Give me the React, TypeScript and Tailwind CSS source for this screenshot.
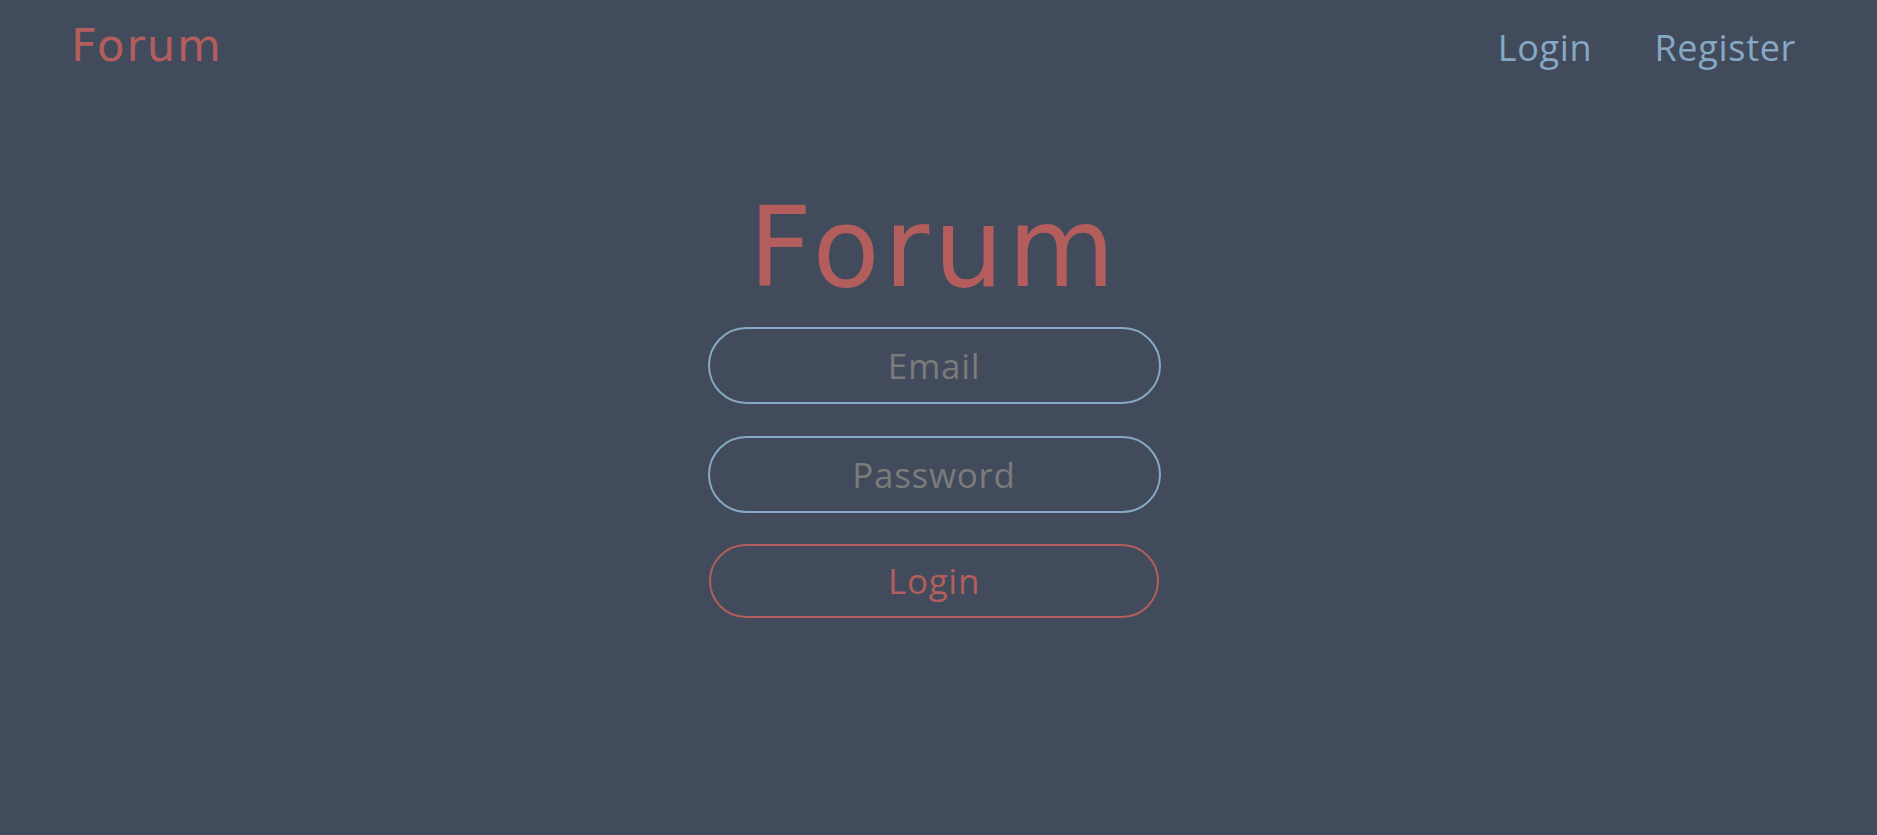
import type { ReactNode } from "react";

function NavLink({ children }: { children: ReactNode }) {
  return (
    <a href="#" className="font-['Open_Sans'] text-[36px] leading-[52px] tracking-[0.7px] text-[#86a8c4]">
      {children}
    </a>
  );
}

function Field({ placeholder, type }: { placeholder: string; type: string }) {
  return (
    <input
      type={type}
      placeholder={placeholder}
      className="h-[77px] w-[453px] rounded-full border-2 border-[#86a8c4] bg-transparent text-center font-['Open_Sans'] text-[35px] tracking-[0.7px] text-[#b0b0b0] outline-none placeholder:text-[#7b7b7b]"
    />
  );
}

export default function App() {
  return (
    <div className="min-h-[835px] w-full bg-[#424b5c]">
      <header className="flex items-baseline justify-between pl-[71px] pr-[81px] pt-[20px]">
        <span className="font-['DejaVu_Sans'] text-[45px] leading-[52px] tracking-[0.04em] text-[#b35e5c]">Forum</span>
        <nav className="flex items-baseline gap-[62px]">
          <NavLink>Login</NavLink>
          <NavLink>Register</NavLink>
        </nav>
      </header>

      <main className="mt-[110px] flex flex-col items-center pr-[9px]">
        <h1 className="font-['DejaVu_Sans'] text-[110px] leading-[128px] tracking-[0.04em] text-[#b35e5c]">Forum</h1>
        <form className="mt-[15px] flex flex-col items-center gap-[32px]">
          <Field type="email" placeholder="Email" />
          <Field type="password" placeholder="Password" />
          <button
            type="button"
            className="mt-[-1px] h-[74px] w-[450px] rounded-full border-2 border-[#b35e5c] font-['Open_Sans'] text-[35px] tracking-[0.7px] text-[#b35e5c]"
          >
            Login
          </button>
        </form>
      </main>
    </div>
  );
}
